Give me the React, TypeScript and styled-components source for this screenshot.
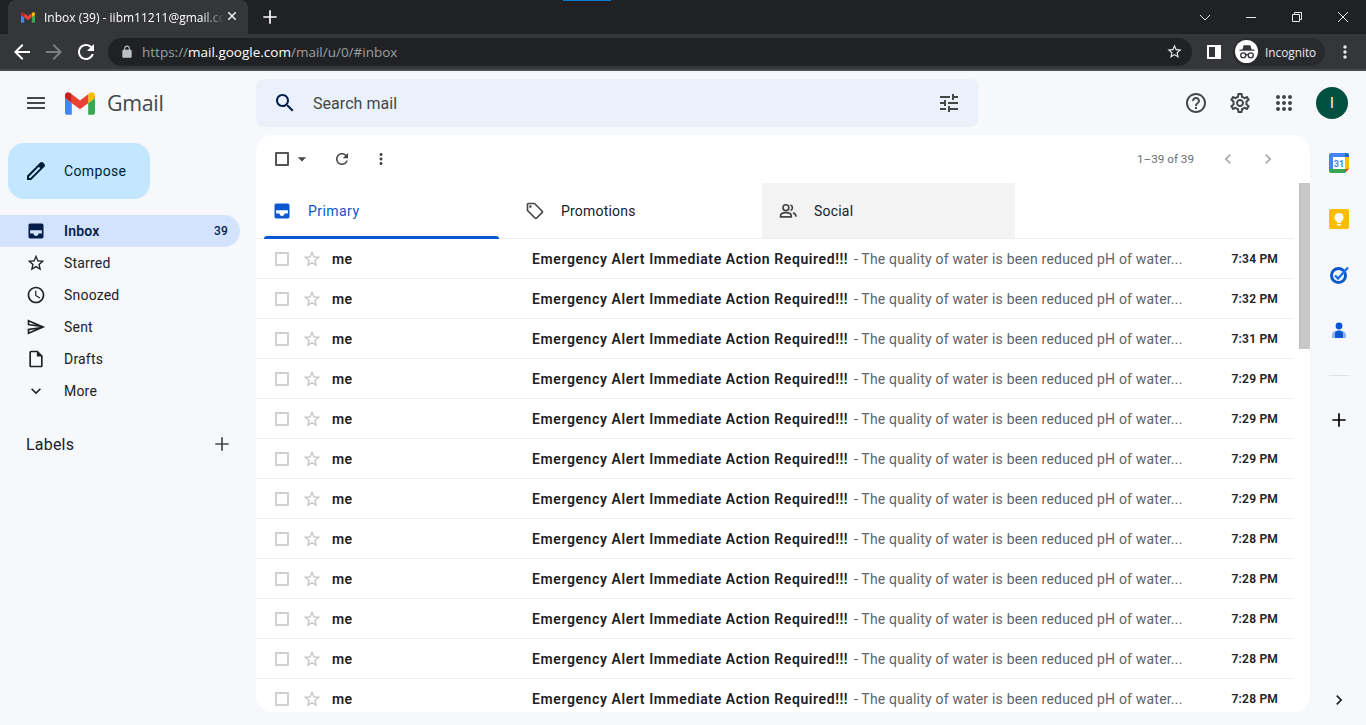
import styled, { createGlobalStyle } from "styled-components";

const GlobalStyle = createGlobalStyle`
    html, body {
        margin: 0;
        height: 100%;
        overflow: hidden;
        background: #f6f8fc;
        font-family: "Roboto", "Liberation Sans", sans-serif;
    }
    * {
        box-sizing: border-box;
    }
`;

const Paths = {
    menu: "M3 18h18v-2H3v2zm0-5h18v-2H3v2zm0-7v2h18V6H3z",
    search: "M15.5 14h-.79l-.28-.27C15.41 12.59 16 11.11 16 9.5 16 5.91 13.09 3 9.5 3S3 5.91 3 9.5 5.91 16 9.5 16c1.61 0 3.09-.59 4.23-1.57l.27.28v.79l5 4.99L20.49 19l-4.99-5zm-6 0C7.01 14 5 11.99 5 9.5S7.01 5 9.5 5 14 7.01 14 9.5 11.99 14 9.5 14z",
    tune: "M3 17v2h6v-2H3zM3 5v2h10V5H3zm10 16v-2h8v-2h-8v-2h-2v6h2zM7 9v2H3v2h4v2h2V9H7zm14 4v-2H11v2h10zm-6-4h2V7h4V5h-4V3h-2v6z",
    help: "M11 18h2v-2h-2v2zm1-16C6.48 2 2 6.48 2 12s4.48 10 10 10 10-4.48 10-10S17.52 2 12 2zm0 18c-4.41 0-8-3.59-8-8s3.59-8 8-8 8 3.59 8 8-3.59 8-8 8zm0-14c-2.21 0-4 1.79-4 4h2c0-1.1.9-2 2-2s2 .9 2 2c0 2-3 1.75-3 5h2c0-2.25 3-2.5 3-5 0-2.21-1.79-4-4-4z",
    settings: "M19.43 12.98c.04-.32.07-.64.07-.98 0-.34-.03-.66-.07-.98l2.11-1.65c.19-.15.24-.42.12-.64l-2-3.46c-.09-.16-.26-.25-.44-.25-.06 0-.12.01-.17.03l-2.49 1c-.52-.4-1.08-.73-1.69-.98l-.38-2.65C14.46 2.18 14.25 2 14 2h-4c-.25 0-.46.18-.49.42l-.38 2.65c-.61.25-1.17.59-1.69.98l-2.49-1c-.06-.02-.12-.03-.18-.03-.17 0-.34.09-.43.25l-2 3.46c-.13.22-.07.49.12.64l2.11 1.65c-.04.32-.07.65-.07.98 0 .33.03.66.07.98l-2.11 1.65c-.19.15-.24.42-.12.64l2 3.46c.09.16.26.25.44.25.06 0 .12-.01.17-.03l2.49-1c.52.4 1.08.73 1.69.98l.38 2.65c.03.24.24.42.49.42h4c.25 0 .46-.18.49-.42l.38-2.65c.61-.25 1.17-.59 1.69-.98l2.49 1c.06.02.12.03.18.03.17 0 .34-.09.43-.25l2-3.46c.12-.22.07-.49-.12-.64l-2.11-1.65zm-1.98-1.71c.04.31.05.52.05.73 0 .21-.02.43-.05.73l-.14 1.13.89.7 1.08.84-.7 1.21-1.27-.51-1.04-.42-.9.68c-.43.32-.84.56-1.25.73l-1.06.43-.16 1.13-.2 1.35h-1.4l-.19-1.35-.16-1.13-1.06-.43c-.43-.18-.83-.41-1.23-.71l-.91-.7-1.06.43-1.27.51-.7-1.21 1.08-.84.89-.7-.14-1.13c-.03-.31-.05-.54-.05-.74s.02-.43.05-.73l.14-1.13-.89-.7-1.08-.84.7-1.21 1.27.51 1.04.42.9-.68c.43-.32.84-.56 1.25-.73l1.06-.43.16-1.13.2-1.35h1.39l.19 1.35.16 1.13 1.06.43c.43.18.83.41 1.23.71l.91.7 1.06-.43 1.27-.51.7 1.21-1.07.85-.89.7.14 1.13zM12 8c-2.21 0-4 1.79-4 4s1.79 4 4 4 4-1.79 4-4-1.79-4-4-4zm0 6c-1.1 0-2-.9-2-2s.9-2 2-2 2 .9 2 2-.9 2-2 2z",
    apps: "M6 8c1.1 0 2-.9 2-2s-.9-2-2-2-2 .9-2 2 .9 2 2 2zm6 12c1.1 0 2-.9 2-2s-.9-2-2-2-2 .9-2 2 .9 2 2 2zm-6 0c1.1 0 2-.9 2-2s-.9-2-2-2-2 .9-2 2 .9 2 2 2zm0-6c1.1 0 2-.9 2-2s-.9-2-2-2-2 .9-2 2 .9 2 2 2zm6 0c1.1 0 2-.9 2-2s-.9-2-2-2-2 .9-2 2 .9 2 2 2zm4-8c0 1.1.9 2 2 2s2-.9 2-2-.9-2-2-2-2 .9-2 2zm-4 2c1.1 0 2-.9 2-2s-.9-2-2-2-2 .9-2 2 .9 2 2 2zm6 6c1.1 0 2-.9 2-2s-.9-2-2-2-2 .9-2 2 .9 2 2 2zm0 6c1.1 0 2-.9 2-2s-.9-2-2-2-2 .9-2 2 .9 2 2 2z",
    star: "M22 9.24l-7.19-.62L12 2 9.19 8.63 2 9.24l5.46 4.73L5.82 21 12 17.27 18.18 21l-1.63-7.03L22 9.24zM12 15.4l-3.76 2.27 1-4.28-3.32-2.88 4.38-.38L12 6.1l1.71 4.04 4.38.38-3.32 2.88 1 4.28L12 15.4z",
    clock: "M11.99 2C6.47 2 2 6.48 2 12s4.47 10 9.99 10C17.52 22 22 17.52 22 12S17.52 2 11.99 2zM12 20c-4.42 0-8-3.58-8-8s3.58-8 8-8 8 3.58 8 8-3.58 8-8 8zm.5-13H11v6l5.25 3.15.75-1.23-4.5-2.67z",
    send: "M4.01 6.03l7.51 3.22-7.52-1 .01-2.22m7.5 8.72L4 17.97v-2.22l7.51-1M2.01 3L2 10l15 2-15 2 .01 7L23 12 2.01 3z",
    draft: "M14 2H6c-1.1 0-1.99.9-1.99 2L4 20c0 1.1.89 2 1.99 2H18c1.1 0 2-.9 2-2V8l-6-6zM6 20V4h7v5h5v11H6z",
    expand: "M16.59 8.59L12 13.17 7.41 8.59 6 10l6 6 6-6z",
    inbox: "M5 3h14c1.1 0 2 .9 2 2v14c0 1.1-.9 2-2 2H5c-1.1 0-2-.9-2-2V5c0-1.1.9-2 2-2zm0 8v4h4c0 1.66 1.35 3 3 3s3-1.34 3-3h4v-4H5z",
    refresh: "M17.65 6.35C16.2 4.9 14.21 4 12 4c-4.42 0-7.99 3.58-7.99 8s3.57 8 7.99 8c3.73 0 6.84-2.55 7.73-6h-2.08c-.82 2.33-3.04 4-5.65 4-3.31 0-6-2.69-6-6s2.69-6 6-6c1.66 0 3.14.69 4.22 1.78L13 11h7V4l-2.35 2.35z",
    dots: "M12 8c1.1 0 2-.9 2-2s-.9-2-2-2-2 .9-2 2 .9 2 2 2zm0 2c-1.1 0-2 .9-2 2s.9 2 2 2 2-.9 2-2-.9-2-2-2zm0 6c-1.1 0-2 .9-2 2s.9 2 2 2 2-.9 2-2-.9-2-2-2z",
    tag: "M21.41 11.58l-9-9C12.05 2.22 11.55 2 11 2H4c-1.1 0-2 .9-2 2v7c0 .55.22 1.05.59 1.42l9 9c.36.36.86.58 1.41.58s1.05-.22 1.41-.59l7-7c.37-.36.59-.86.59-1.41s-.23-1.06-.59-1.42zM13 20.01L4 11V4h7v-.01l9 8.99-7 7.03zM6.5 5C5.67 5 5 5.67 5 6.5S5.67 8 6.5 8 8 7.33 8 6.5 7.33 5 6.5 5z",
    pencil: "M20.41 4.94l-1.35-1.35c-.78-.78-2.05-.78-2.83 0L3 16.82V21h4.18L20.41 7.77c.79-.78.79-2.05 0-2.83zm-14 14.12L5 19v-1.36l9.82-9.82 1.41 1.41-9.82 9.83z",
    plus: "M20 13h-7v7h-2v-7H4v-2h7V4h2v7h7v2z",
    left: "M15.41 7.41L14 6l-6 6 6 6 1.41-1.41L10.83 12z",
    right: "M8.59 16.59L10 18l6-6-6-6-1.41 1.41L13.17 12z",
    caret: "M7 10l5 5 5-5z",
    back: "M20 11H7.83l5.59-5.59L12 4l-8 8 8 8 1.41-1.41L7.83 13H20v-2z",
    forward: "M12 4l-1.41 1.41L16.17 11H4v2h12.17l-5.58 5.59L12 20l8-8z",
    lock: "M18 8h-1V6c0-2.76-2.24-5-5-5S7 3.24 7 6v2H6c-1.1 0-2 .9-2 2v10c0 1.1.9 2 2 2h12c1.1 0 2-.9 2-2V10c0-1.1-.9-2-2-2zM9 6c0-1.66 1.34-3 3-3s3 1.34 3 3v2H9V6z",
    close: "M18.3 5.71L16.89 4.3 12 9.17 7.11 4.3 5.7 5.71 10.59 10.6 5.7 15.49l1.41 1.41L12 12.01l4.89 4.89 1.41-1.41-4.89-4.89z",
};

const Icon = styled.svg.attrs({ viewBox: "0 0 24 24" }) <{ $size?: number; $color?: string }>`
    width: ${(p) => p.$size ?? 24}px;
    height: ${(p) => p.$size ?? 24}px;
    fill: ${(p) => p.$color ?? "#444746"};
    fill-rule: evenodd;
    flex-shrink: 0;
    display: block;
`;

const Glyph = ({ d, size, color }: { d: string; size?: number; color?: string }) => (
    <Icon $size={size} $color={color}>
        <path d={d} />
    </Icon>
);

/* ---------- browser frame ---------- */

const Frame = styled.header`
    position: relative;
    background: #202124;
`;

const LoadBar = styled.div`
    position: absolute;
    top: 0;
    left: 563px;
    width: 48px;
    height: 1px;
    background: #0a7ad6;
`;

const TabStrip = styled.div`
    display: flex;
    align-items: flex-end;
    height: 34px;
    padding-left: 8px;
`;

const BrowserTab = styled.div`
    display: flex;
    align-items: center;
    width: 240px;
    height: 34px;
    padding: 0 8px 0 13px;
    background: #35363a;
    border-radius: 8px 8px 0 0;
    color: #fff;
`;

const TabTitle = styled.span`
    flex: 1;
    margin-left: 9px;
    overflow: hidden;
    white-space: nowrap;
    font: 12px "Open Sans", "Liberation Sans", sans-serif;
    -webkit-mask-image: linear-gradient(90deg, #000 88%, transparent 100%);
    mask-image: linear-gradient(90deg, #000 88%, transparent 100%);
`;

const NewTab = styled.div`
    margin: 0 0 7px 12px;
`;

const WindowButtons = styled.div`
    display: flex;
    margin-left: auto;
    align-self: stretch;
    align-items: center;
`;

const WindowButton = styled.div`
    display: flex;
    justify-content: center;
    align-items: center;
    width: 46px;
    height: 28px;
`;

const WinIcon = styled.svg.attrs({ viewBox: "0 0 12 12" })`
    width: 12px;
    height: 12px;
    fill: none;
    stroke: #e8eaed;
    stroke-width: 1;
`;

const Toolbar = styled.div`
    display: flex;
    align-items: center;
    height: 37px;
    padding: 0 11px 0 10px;
    background: #35363a;
    border-bottom: 2px solid #4a4b4f;
`;

const NavButtons = styled.div`
    display: flex;
    gap: 8px;
    margin-right: 10px;
`;

const Omnibox = styled.div`
    display: flex;
    flex: 1;
    align-items: center;
    height: 28px;
    padding: 0 9px 0 12px;
    background: #202124;
    border-radius: 14px;
`;

const Url = styled.span`
    flex: 1;
    margin-left: 8px;
    font: 13.5px "Open Sans", "Liberation Sans", sans-serif;
    color: #9aa0a6;
    white-space: nowrap;
`;

const UrlHost = styled.span`
    color: #fff;
`;

const PanelToggle = styled.div`
    margin: 0 6px 0 15px;
    width: 14px;
    height: 14px;
    border: 2px solid #fff;
    border-right-width: 6px;
    background: transparent;
`;

const Profile = styled.div`
    display: flex;
    align-items: center;
    width: 92px;
    height: 28px;
    padding-left: 2px;
    margin-left: 6px;
    background: #292a2d;
    border-radius: 14px;
    color: #e8eaed;
    font: 11.8px "Open Sans", "Liberation Sans", sans-serif;
`;

const IncognitoBadge = styled.div`
    display: flex;
    justify-content: center;
    align-items: center;
    width: 23px;
    height: 23px;
    margin-right: 7px;
    background: #fff;
    border-radius: 50%;
`;

const ChromeMenu = styled.div`
    margin-left: 10px;
`;

/* ---------- gmail header ---------- */

const Page = styled.div`
    display: flex;
    flex-direction: column;
    height: 654px;
    background: #f6f8fc;
`;

const Header = styled.div`
    display: flex;
    align-items: center;
    height: 64px;
    flex-shrink: 0;
`;

const Brand = styled.div`
    display: flex;
    align-items: center;
    width: 256px;
    padding-left: 24px;
`;

const Logo = styled.svg.attrs({ viewBox: "52 42 88 66" })`
    width: 30px;
    height: 23px;
    margin: 0 12px 0 17px;
`;

const LogoText = styled.span`
    margin-top: -2px;
    font: 21.4px "Open Sans", "Roboto", sans-serif;
    color: #444746;
    letter-spacing: -0.3px;
`;

const SearchBar = styled.div`
    display: flex;
    align-items: center;
    width: 722px;
    height: 48px;
    padding: 0 17px 0 17px;
    background: #eaf1fb;
    border-radius: 8px;
`;

const SearchText = styled.span`
    flex: 1;
    margin-left: 16px;
    font: 16px "Roboto", sans-serif;
    letter-spacing: 0.05px;
    color: #444746;
`;

const HeaderActions = styled.div`
    display: flex;
    align-items: center;
    gap: 20px;
    margin-left: auto;
    padding-right: 18px;
`;

const Avatar = styled.div`
    display: flex;
    justify-content: center;
    align-items: center;
    width: 32px;
    height: 32px;
    background: #00513f;
    border-radius: 50%;
    color: #fff;
    font: 14px "Roboto", sans-serif;
`;

/* ---------- sidebar ---------- */

const Body = styled.div`
    display: flex;
    flex: 1;
    min-height: 0;
    padding-bottom: 13px;
`;

const Sidebar = styled.aside`
    width: 256px;
    flex-shrink: 0;
    padding-top: 8px;
`;

const Compose = styled.div`
    display: flex;
    align-items: center;
    width: 142px;
    height: 56px;
    margin-left: 8px;
    padding-left: 16px;
    background: #c2e7ff;
    border-radius: 16px;
    color: #001d35;
    font-size: 14px;
    letter-spacing: 0.35px;
    gap: 16px;
`;

const NavList = styled.ul`
    margin: 16px 0 0;
    padding: 0;
    list-style: none;
    width: 240px;
`;

const NavItem = styled.li<{ $active?: boolean }>`
    display: flex;
    align-items: center;
    height: 32px;
    padding: 0 12px 0 26px;
    gap: 18px;
    border-radius: 0 16px 16px 0;
    font-size: 14px;
    letter-spacing: 0.2px;
    background: ${(p) => (p.$active ? "#d3e3fd" : "transparent")};
    color: ${(p) => (p.$active ? "#041e49" : "#202124")};
    font-weight: ${(p) => (p.$active ? 600 : 400)};
`;

const NavCount = styled.span`
    margin-left: auto;
    font-size: 12px;
    font-weight: 500;
`;

const LabelsRow = styled.div`
    display: flex;
    align-items: center;
    justify-content: space-between;
    width: 240px;
    height: 32px;
    margin-top: 21px;
    padding: 0 8px 0 26px;
    font-size: 16px;
    letter-spacing: 0.2px;
    color: #202124;
`;

/* ---------- mail panel ---------- */

const Panel = styled.main`
    position: relative;
    width: 1054px;
    flex-shrink: 0;
    padding-right: 16px;
    background: #fff;
    border-radius: 16px;
    overflow: hidden;
`;

const ScrollThumb = styled.div`
    position: absolute;
    top: 48px;
    right: 0;
    width: 11px;
    height: 166px;
    background: #c8c8c8;
    border-left: 1px solid #bdbdbd;
`;

const ListToolbar = styled.div`
    display: flex;
    align-items: center;
    height: 48px;
    padding-left: 19px;
`;

const Check = styled.span<{ $dark?: boolean }>`
    display: block;
    width: 14px;
    height: 14px;
    flex-shrink: 0;
    border: 2px solid ${(p) => (p.$dark ? "#555" : "#d0d0d0")};
    border-radius: 1px;
`;

const ToolButtons = styled.div`
    display: flex;
    align-items: center;
    margin-left: 3px;
`;

const ToolRefresh = styled.div`
    margin: 0 21px;
`;

const Pager = styled.div`
    display: flex;
    align-items: center;
    margin-left: auto;
    padding-right: 16px;
    font-size: 11.7px;
    color: #6b6e72;
`;

const PagerText = styled.span`
    margin-right: 24px;
`;

const PagerButtons = styled.div`
    display: flex;
    gap: 20px;
`;

const Tabs = styled.div`
    display: flex;
    height: 56px;
    border-bottom: 1px solid #eceff1;
`;

const Tab = styled.div<{ $width: number; $pad: number; $active?: boolean; $shaded?: boolean }>`
    position: relative;
    display: flex;
    align-items: center;
    gap: 16px;
    width: ${(p) => p.$width}px;
    padding-left: ${(p) => p.$pad}px;
    margin-left: ${(p) => (p.$active ? 8 : 0)}px;
    background: ${(p) => (p.$shaded ? "#f3f3f3" : "transparent")};
    color: ${(p) => (p.$active ? "#0b57d0" : "#202124")};
    font-size: 14px;
    letter-spacing: ${(p) => (p.$active ? 0.45 : 0.2)}px;
`;

const TabMarker = styled.div`
    position: absolute;
    left: 0;
    right: 0;
    bottom: -1px;
    height: 3px;
    background: #0b57d0;
    border-radius: 3px 3px 0 0;
`;

const PeopleIcon = styled.svg.attrs({ viewBox: "0 0 24 24" })`
    width: 20px;
    height: 20px;
    flex-shrink: 0;
    fill: none;
    stroke: #444746;
    stroke-width: 2;
`;

const Row = styled.div`
    display: flex;
    align-items: center;
    height: 40px;
    padding: 0 16px 0 19px;
    border-bottom: 1px solid #f0f0f0;
    font-size: 14px;
    color: #202124;
`;

const RowStar = styled.div`
    margin: 0 10px 0 13px;
`;

const Sender = styled.span`
    width: 200px;
    flex-shrink: 0;
    font-weight: 600;
    letter-spacing: 0.4px;
`;

const Subject = styled.span`
    font-weight: 600;
    letter-spacing: 0.6px;
    white-space: nowrap;
`;

const Snippet = styled.span`
    flex: 1;
    margin-left: 2px;
    color: #5f6368;
    letter-spacing: 0.2px;
    white-space: nowrap;
`;

const Time = styled.span`
    font-size: 12px;
    font-weight: 600;
    letter-spacing: 0.2px;
`;

/* ---------- right rail ---------- */

const Rail = styled.aside`
    display: flex;
    flex-direction: column;
    align-items: center;
    flex: 1;
    padding: 16px 0 0 2px;
`;

const RailSlot = styled.div`
    display: flex;
    justify-content: center;
    align-items: center;
    height: 24px;
    margin-bottom: 32px;
`;

const RailDivider = styled.div`
    width: 20px;
    height: 1px;
    margin-bottom: 32px;
    background: #dfe1e5;
`;

const RailBottom = styled.div`
    margin-top: auto;
    margin-bottom: 2px;
`;

const RailSvg = styled.svg.attrs({ viewBox: "0 0 24 24" })`
    width: 24px;
    height: 24px;
`;

const CalendarDate = styled.text`
    font: 700 9px "Roboto", sans-serif;
    fill: #4285f4;
`;

const times = ["7:34", "7:32", "7:31", "7:29", "7:29", "7:29", "7:29", "7:28", "7:28", "7:28", "7:28", "7:28"];

const folders = [
    { label: "Starred", icon: Paths.star },
    { label: "Snoozed", icon: Paths.clock },
    { label: "Sent", icon: Paths.send },
    { label: "Drafts", icon: Paths.draft },
    { label: "More", icon: Paths.expand },
];

function App() {
    return (
        <>
            <GlobalStyle />
            <Frame>
                <LoadBar />
                <TabStrip>
                    <BrowserTab>
                        <GmailMark width={14} height={11} />
                        <TabTitle>Inbox (39) - iibm11211@gmail.com - Gmail</TabTitle>
                        <Glyph d={Paths.close} size={16} color="#fff" />
                    </BrowserTab>
                    <NewTab>
                        <Glyph d={Paths.plus} size={20} color="#fff" />
                    </NewTab>
                    <WindowButtons>
                        <WindowButton>
                            <WinIcon>
                                <path d="M1 4l5 5 5-5" />
                            </WinIcon>
                        </WindowButton>
                        <WindowButton>
                            <WinIcon>
                                <path d="M1 6.5h10" />
                            </WinIcon>
                        </WindowButton>
                        <WindowButton>
                            <WinIcon>
                                <path d="M1.5 3.5h7v7h-7zM3.5 3.5v-2h7v7h-2" />
                            </WinIcon>
                        </WindowButton>
                        <WindowButton>
                            <WinIcon>
                                <path d="M1 1l10 10M11 1L1 11" />
                            </WinIcon>
                        </WindowButton>
                    </WindowButtons>
                </TabStrip>
                <Toolbar>
                    <NavButtons>
                        <Glyph d={Paths.back} color="#fff" />
                        <Glyph d={Paths.forward} color="#7c7d80" />
                        <Glyph d={Paths.refresh} color="#fff" />
                    </NavButtons>
                    <Omnibox>
                        <Glyph d={Paths.lock} size={14} color="#bdc1c6" />
                        <Url>
                            https://<UrlHost>mail.google.com</UrlHost>/mail/u/0/#inbox
                        </Url>
                        <Glyph d={Paths.star} size={17} color="#e8eaed" />
                    </Omnibox>
                    <PanelToggle />
                    <Profile>
                        <IncognitoBadge>
                            <svg viewBox="0 0 24 24" width="20" height="20">
                                <path fill="#35363a" d="M8 4h8l1.5 5H21v1.5H3V9h3.5z" />
                                <g fill="none" stroke="#35363a" strokeWidth="1.6">
                                    <circle cx="7.5" cy="16" r="3" />
                                    <circle cx="16.5" cy="16" r="3" />
                                    <path d="M10.5 15.5c1-.7 2-.7 3 0" />
                                </g>
                            </svg>
                        </IncognitoBadge>
                        Incognito
                    </Profile>
                    <ChromeMenu>
                        <Glyph d={Paths.dots} size={20} color="#e8eaed" />
                    </ChromeMenu>
                </Toolbar>
            </Frame>
            <Page>
                <Header>
                    <Brand>
                        <Glyph d={Paths.menu} />
                        <Logo>
                            <GmailPaths />
                        </Logo>
                        <LogoText>Gmail</LogoText>
                    </Brand>
                    <SearchBar>
                        <Glyph d={Paths.search} color="#041e49" />
                        <SearchText>Search mail</SearchText>
                        <Glyph d={Paths.tune} color="#444746" />
                    </SearchBar>
                    <HeaderActions>
                        <Glyph d={Paths.help} />
                        <Glyph d={Paths.settings} />
                        <Glyph d={Paths.apps} />
                        <Avatar>I</Avatar>
                    </HeaderActions>
                </Header>
                <Body>
                    <Sidebar>
                        <Compose>
                            <Glyph d={Paths.pencil} color="#001d35" />
                            Compose
                        </Compose>
                        <NavList>
                            <NavItem $active>
                                <Glyph d={Paths.inbox} size={20} color="#041e49" />
                                Inbox
                                <NavCount>39</NavCount>
                            </NavItem>
                            {folders.map((f) => (
                                <NavItem key={f.label}>
                                    <Glyph d={f.icon} size={20} color="#202124" />
                                    {f.label}
                                </NavItem>
                            ))}
                        </NavList>
                        <LabelsRow>
                            Labels
                            <Glyph d={Paths.plus} size={20} />
                        </LabelsRow>
                    </Sidebar>
                    <Panel>
                        <ScrollThumb />
                        <ListToolbar>
                            <Check $dark />
                            <ToolButtons>
                                <Glyph d={Paths.caret} size={20} color="#444746" />
                                <ToolRefresh>
                                    <Glyph d={Paths.refresh} size={18} />
                                </ToolRefresh>
                                <Glyph d={Paths.dots} size={18} />
                            </ToolButtons>
                            <Pager>
                                <PagerText>1–39 of 39</PagerText>
                                <PagerButtons>
                                    <Glyph d={Paths.left} size={20} color="#a8abae" />
                                    <Glyph d={Paths.right} size={20} color="#a8abae" />
                                </PagerButtons>
                            </Pager>
                        </ListToolbar>
                        <Tabs>
                            <Tab $width={235} $pad={8} $active>
                                <Glyph d={Paths.inbox} size={20} color="#0b57d0" />
                                Primary
                                <TabMarker />
                            </Tab>
                            <Tab $width={263} $pad={26}>
                                <Glyph d={Paths.tag} size={20} />
                                Promotions
                            </Tab>
                            <Tab $width={253} $pad={16} $shaded>
                                <PeopleIcon>
                                    <circle cx="9.5" cy="8" r="3.5" />
                                    <path d="M3 19v-1c0-2.5 3-4 6.5-4s6.5 1.5 6.5 4v1z" />
                                    <path d="M15 4.7a3.5 3.5 0 0 1 0 6.6M18 14.3c2 .6 3.5 1.9 3.5 3.7v1" />
                                </PeopleIcon>
                                Social
                            </Tab>
                        </Tabs>
                        {times.map((t, i) => (
                            <Row key={i}>
                                <Check />
                                <RowStar>
                                    <Glyph d={Paths.star} size={20} color="#c4c7c5" />
                                </RowStar>
                                <Sender>me</Sender>
                                <Subject>Emergency Alert Immediate Action Required!!!</Subject>
                                <Snippet>&nbsp;- The quality of water is been reduced pH of water...</Snippet>
                                <Time>{t} PM</Time>
                            </Row>
                        ))}
                    </Panel>
                    <Rail>
                        <RailSlot>
                            <RailSvg>
                                <path fill="#fff" d="M6 6h12v12H6z" />
                                <path fill="#4285f4" d="M4 2h15v4H6v12H2V4a2 2 0 0 1 2-2z" />
                                <path fill="#fbbc04" d="M18 6h4v12h-4z" />
                                <path fill="#34a853" d="M2 18h16v4H4a2 2 0 0 1-2-2z" />
                                <path fill="#1967d2" d="M18 2h2a2 2 0 0 1 2 2v2h-4z" />
                                <path fill="#ea4335" d="M18 18h4l-4 4z" />
                                <CalendarDate x="12" y="15.5" textAnchor="middle">31</CalendarDate>
                            </RailSvg>
                        </RailSlot>
                        <RailSlot>
                            <RailSvg>
                                <rect x="2" y="2" width="20" height="20" rx="2" fill="#fbbc04" />
                                <circle cx="12" cy="10.5" r="4.6" fill="#fff" />
                                <path fill="#fff" d="M10 14h4v2h-4zM10 17h4v1.4h-4z" />
                            </RailSvg>
                        </RailSlot>
                        <RailSlot>
                            <RailSvg>
                                <circle cx="11.5" cy="12.5" r="7" fill="none" stroke="#0b57d0" strokeWidth="3" />
                                <path fill="none" stroke="#1a73e8" strokeWidth="2.4" d="M8 12.5l3 3 10-11" />
                            </RailSvg>
                        </RailSlot>
                        <RailSlot>
                            <RailSvg>
                                <circle cx="12" cy="7" r="3.4" fill="#0b57d0" />
                                <path fill="#8ab4f8" d="M5 19v-3c0-2.5 2.5-4.5 7-4.5s7 2 7 4.5v3z" />
                                <path fill="#0b57d0" d="M8 19v-5.5c1-1.3 2.5-2 4-2s3 .7 4 2V19z" />
                            </RailSvg>
                        </RailSlot>
                        <RailDivider />
                        <RailSlot>
                            <Glyph d={Paths.plus} size={20} color="#000" />
                        </RailSlot>
                        <RailBottom>
                            <Glyph d={Paths.right} size={20} color="#202124" />
                        </RailBottom>
                    </Rail>
                </Body>
            </Page>
        </>
    );
}

function GmailPaths() {
    return (
        <>
            <path fill="#4285f4" d="M58 108h14V74L52 59v43c0 3.32 2.69 6 6 6" />
            <path fill="#34a853" d="M120 108h14c3.32 0 6-2.69 6-6V59l-20 15" />
            <path fill="#fbbc04" d="M120 48v26l20-15v-8c0-7.42-8.47-11.65-14.4-7.2" />
            <path fill="#ea4335" d="M72 74V48l24 18 24-18v26L96 92" />
            <path fill="#c5221f" d="M52 51v8l20 15V48l-5.6-4.2c-5.94-4.45-14.4-.22-14.4 7.2" />
        </>
    );
}

function GmailMark({ width, height }: { width: number; height: number }) {
    return (
        <svg viewBox="52 42 88 66" width={width} height={height}>
            <GmailPaths />
        </svg>
    );
}

export default App;
